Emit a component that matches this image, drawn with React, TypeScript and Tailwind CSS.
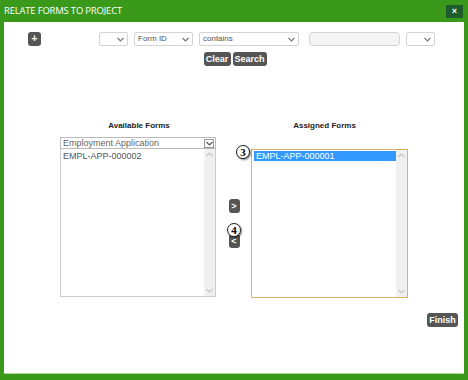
import React from 'react';

const font = { fontFamily: '"Liberation Sans", Arial, sans-serif' };

function Chevron({ className = '' }: { className?: string }) {
  return (
    <svg className={className} width="7" height="5" viewBox="0 0 7 5" fill="none" stroke="currentColor" strokeWidth={1.2}>
      <path d="M0.5 1 L3.5 4 L6.5 1" />
    </svg>
  );
}

function Select({ w, label }: { w: string; label?: string }) {
  return (
    <div className={`${w} h-[14px] border border-[#d4d4d4] rounded-[2px] bg-white flex items-center justify-between pl-[3px] pr-[3px]`}>
      <span className="text-[8px] text-[#555] leading-none">{label}</span>
      <Chevron className="text-[#777]" />
    </div>
  );
}

function DarkButton({ children, className = '' }: { children: React.ReactNode; className?: string }) {
  return (
    <div className={`h-[14px] bg-[#555] rounded-[3px] text-white font-bold text-[9px] flex items-center justify-center leading-none ${className}`}>
      {children}
    </div>
  );
}

function Scrollbar() {
  return (
    <div className="w-[11px] bg-[#f0f0f0] flex flex-col justify-between items-center py-[3px]">
      <Chevron className="text-[#c4c4c4] rotate-180" />
      <Chevron className="text-[#c4c4c4]" />
    </div>
  );
}

function Badge({ n }: { n: string }) {
  return (
    <div className="w-[14px] h-[14px] rounded-full bg-white border border-[#222] shadow-[1px_1px_2px_rgba(0,0,0,0.5)] flex items-center justify-center text-[11px] font-bold text-black leading-none" style={{ fontFamily: '"Liberation Serif", serif' }}>
      {n}
    </div>
  );
}

export default function App() {
  return (
    <div className="w-[468px] h-[380px] bg-[#3a991a] flex flex-col" style={font}>
      {/* Title bar */}
      <div className="h-[22px] flex items-center justify-between pl-[4px] pr-[5px]">
        <span className="text-white text-[9.5px] tracking-[-0.2px]" style={{ fontFamily: '"Open Sans", sans-serif' }}>RELATE FORMS TO PROJECT</span>
        <div className="w-[17px] h-[13px] bg-[#1d5c2b] flex items-center justify-center text-white text-[9px] font-bold leading-none">×</div>
      </div>

      {/* Body */}
      <div className="mx-[4px] h-[352px] bg-white relative flex flex-col border-b border-[#a9d79a]">
        {/* Filter row */}
        <div className="flex items-center mt-[10px] pl-[24px]">
          <DarkButton className="w-[13px] text-[10px]">+</DarkButton>
          <div className="flex items-center ml-[58px] gap-[6px]">
            <Select w="w-[29px]" />
            <Select w="w-[59px]" label="Form ID" />
            <Select w="w-[100px]" label="contains" />
            <div className="w-[91px] h-[14px] ml-[4px] border border-[#d4d4d4] rounded-[4px] bg-[#f4f4f4]" />
            <Select w="w-[29px]" />
          </div>
        </div>

        {/* Clear / Search */}
        <div className="flex justify-center gap-[2px] mt-[6px] pl-[2px]">
          <DarkButton className="w-[27px]">Clear</DarkButton>
          <DarkButton className="w-[34px]">Search</DarkButton>
        </div>

        {/* Lists */}
        <div className="flex mt-[54px] pl-[56px]">
          <div className="w-[156px] flex flex-col">
            <div className="text-center text-[8px] font-bold text-[#222] h-[19px] pl-[2px]">Available Forms</div>
            <div className="h-[12px] border border-[#bbb] flex items-center justify-between pl-[2px] pr-[1px] mt-[-2px]">
              <span className="text-[9px] text-[#666] leading-none">Employment Application</span>
              <div className="w-[10px] h-[9px] border border-[#999] flex items-center justify-center">
                <Chevron className="text-[#555]" />
              </div>
            </div>
            <div className="h-[148px] border border-t-0 border-[#ccc] flex">
              <div className="flex-1 pl-[2px] pt-[1px] text-[9px] text-[#555]">EMPL-APP-000002</div>
              <Scrollbar />
            </div>
          </div>

          <div className="w-[12px] ml-[12px] flex flex-col items-center pt-[79px] relative">
            <DarkButton className="w-[11px] h-[13px] text-[8px]">&gt;</DarkButton>
            <DarkButton className="w-[11px] h-[13px] text-[8px] mt-[21px]">&lt;</DarkButton>
            <div className="absolute left-[-1px] top-[103px]">
              <Badge n="4" />
            </div>
          </div>

          <div className="w-[157px] ml-[11px] flex flex-col relative">
            <div className="text-center text-[8px] font-bold text-[#222] h-[15px] pr-[10px]">Assigned Forms</div>
            <div className="h-[149px] mt-[14px] border border-[#dcb06a] flex">
              <div className="flex-1 pl-[2px] pt-[1px]">
                <div className="bg-[#3399ff] text-white text-[9px] h-[10px] leading-[10px] pl-[2px]">EMPL-APP-000001</div>
              </div>
              <Scrollbar />
            </div>
            <div className="absolute left-[-15px] top-[25px]">
              <Badge n="3" />
            </div>
          </div>
        </div>

        {/* Finish */}
        <div className="flex justify-end mt-[15px] pr-[6px]">
          <DarkButton className="w-[31px]">Finish</DarkButton>
        </div>
      </div>
    </div>
  );
}
